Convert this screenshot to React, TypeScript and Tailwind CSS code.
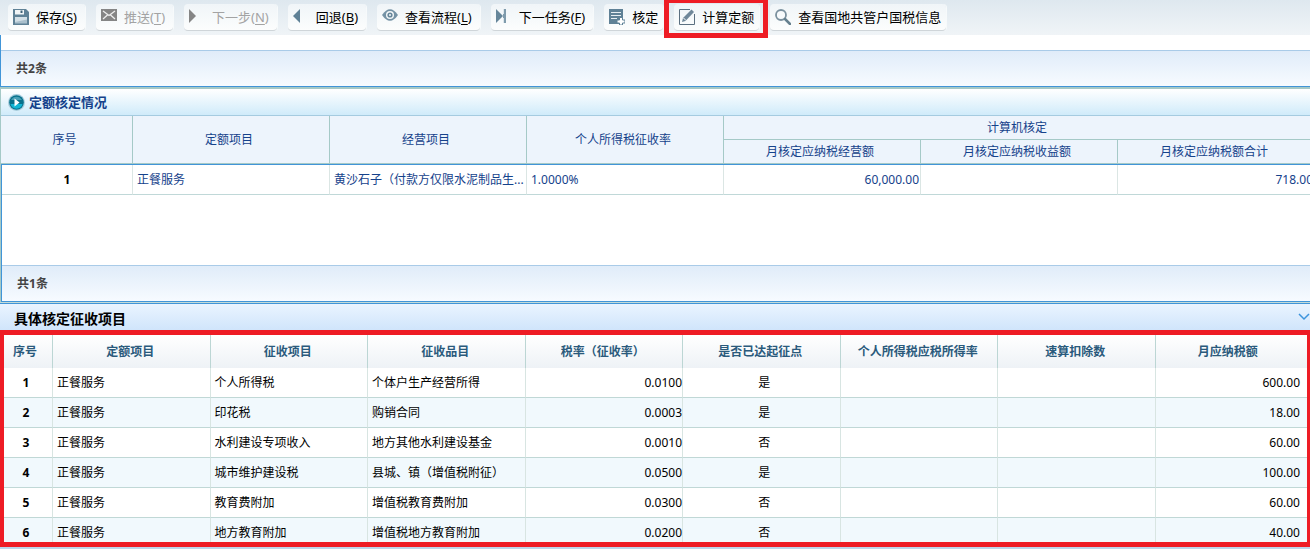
import type { ReactNode } from 'react';

type Action = {
  label: string;
  hotkey?: string;
  icon: ReactNode;
  disabled?: boolean;
  highlighted?: boolean;
};

function Icon({ children }: { children: ReactNode }) {
  return (
    <svg width="16" height="16" viewBox="0 0 16 16" className="shrink-0" aria-hidden="true">
      {children}
    </svg>
  );
}

const actions: Action[] = [
  {
    label: '保存',
    hotkey: 'S',
    icon: (
      <Icon>
        <path d="M0 0h13L16 3v13H0z" fill="#5f8196" />
        <path d="M2 1h9v4.500H2z" fill="#f1f5f7" />
        <path d="M7.500 1.500h2v2.500h-2z" fill="#3f6176" />
        <path d="M2 8h12v6.500H2z" fill="#a9bfcc" />
        <path d="M2 8h12v2.500L2 13z" fill="#d3dfe6" />
      </Icon>
    ),
  },
  {
    label: '推送',
    hotkey: 'T',
    disabled: true,
    icon: (
      <Icon>
        <path d="M0 0h16v12H0z" fill="#858585" />
        <path d="M2 2l6 4.500L14 2M2 10l4.500-4M14 10L9.500 6" stroke="#eee" strokeWidth="1.300" fill="none" />
      </Icon>
    ),
  },
  {
    label: '下一步',
    hotkey: 'N',
    disabled: true,
    icon: (
      <Icon>
        <path d="M0 0l7 7-7 7z" fill="#858585" />
      </Icon>
    ),
  },
  {
    label: '回退',
    hotkey: 'B',
    icon: (
      <Icon>
        <path d="M7 0v14L0 7z" fill="#5f8196" />
      </Icon>
    ),
  },
  {
    label: '查看流程',
    hotkey: 'L',
    icon: (
      <Icon>
        <path d="M0 6Q8-5.500 16 6 8 17.500 0 6z" fill="#7492a5" />
        <circle cx="8" cy="6" r="4" fill="#f3f7f9" />
        <circle cx="8" cy="6" r="2.600" fill="#66869a" />
        <circle cx="8" cy="6" r="1" fill="#f3f7f9" />
      </Icon>
    ),
  },
  {
    label: '下一任务',
    hotkey: 'F',
    icon: (
      <Icon>
        <path d="M0 0l7 7-7 7z" fill="#66869a" />
        <path d="M7 0h3v14H7z" fill="#7f9bac" />
        <path d="M7.500 0v5M7.500 9v5" stroke="#dce6ec" />
      </Icon>
    ),
  },
  {
    label: '核定',
    icon: (
      <Icon>
        <path d="M0 0h14v15H0z" fill="#5f8196" />
        <path d="M2 3.500h10M2 6.500h10M2 9.500h6" stroke="#e6edf1" />
        <path d="M10.500 8.500h3v2.500h2.500v3h-2.500v2h-3v-2H8v-3h2.500z" fill="#fff" stroke="#5f8196" />
      </Icon>
    ),
  },
  {
    label: '计算定额',
    highlighted: true,
    icon: (
      <Icon>
        <path d="M11 .5H.5v15h15V5" stroke="#5b6f80" fill="none" />
        <path d="M3 13l1-4L12.500.5 15 3l-8.500 9z" fill="#70889a" />
        <path d="M4.500 9l2.500 2.500" stroke="#fff" />
      </Icon>
    ),
  },
  {
    label: '查看国地共管户国税信息',
    icon: (
      <Icon>
        <circle cx="6" cy="6" r="5" stroke="#7b919f" strokeWidth="1.800" fill="#f7fafc" />
        <path d="M10 10l5 5" stroke="#66808f" strokeWidth="2.500" strokeLinecap="round" />
      </Icon>
    ),
  },
];

function ToolbarButton({ label, hotkey, icon, disabled, highlighted }: Action) {
  return (
    <div className="relative shrink-0">
      <button
        type="button"
        disabled={disabled}
        className={`${hotkey ? 'pr-2' : 'pr-[5px]'} flex h-[27px] items-center gap-[7px] whitespace-nowrap rounded-sm border-b border-[#cfd5d9] bg-gradient-to-b from-[#f0f5f8] to-[#fcfdfd] pl-[5px] text-[13px] leading-5 text-black shadow-[1px_0_0_#f7fafb] disabled:text-[#a3a3a3]`}
      >
        {icon}
        <span>
          {label}
          {hotkey && (
            <>
              (<u className="underline-offset-2">{hotkey}</u>)
            </>
          )}
        </span>
      </button>
      {highlighted && (
        <div className="pointer-events-none absolute -left-[10px] -right-[9px] -top-1 -bottom-[7px] z-10 border-5 border-t-3 border-[#ee1c25]" />
      )}
    </div>
  );
}

function CountBar({ count }: { count: number }) {
  return (
    <div className="flex h-9 items-center border-t border-[#a9cbe8] bg-gradient-to-b from-[#e0ecf9] to-[#f7fbff] px-[15px] text-xs font-bold text-[#444]">
      共{count}条
    </div>
  );
}

const quotaHead = 'border-r border-b border-[#a5c9c7] bg-[#edf4fc] py-0 pl-0 pr-1 text-center font-normal';
const quotaCell = 'h-[30px] border-r border-b border-r-[#dbe6e4] border-b-[#c0d8d8] py-0';

function QuotaPanel() {
  return (
    <section className="border-t-2 border-l border-[#a5c9c7]">
      <h2 className="flex h-[27px] items-center gap-1 border-b border-[#a5cbe0] bg-gradient-to-b from-white to-[#d0ebfa] pl-[7px] text-[13px] font-bold text-[#15428b]">
        <svg width="17" height="17" viewBox="0 0 17 17" aria-hidden="true">
          <circle cx="8.500" cy="8.500" r="8.500" fill="#a8cddd" />
          <circle cx="8.500" cy="8.500" r="7.300" fill="#08718c" />
          <path d="M2.500 10a6.200 6.200 0 0 0 12 0z" fill="#12b5d4" />
          <path d="M3 6a6.200 6.200 0 0 1 11 0z" fill="#479fb5" />
          <path d="M6.500 4.500l5 4-5 4z" fill="#fff" />
        </svg>
        <span className="pt-0.5">定额核定情况</span>
      </h2>
      <div className="overflow-hidden">
        <table className="w-[calc(100%+5px)] table-fixed border-separate border-spacing-0 text-xs text-[#15428b]">
          <colgroup>
            <col className="w-[132px]" />
            <col span={6} />
          </colgroup>
          <thead>
            <tr className="h-6">
              <th rowSpan={2} className={quotaHead}>序号</th>
              <th rowSpan={2} className={quotaHead}>定额项目</th>
              <th rowSpan={2} className={quotaHead}>经营项目</th>
              <th rowSpan={2} className={quotaHead}>个人所得税征收率</th>
              <th colSpan={3} className={quotaHead}>计算机核定</th>
            </tr>
            <tr className="h-6">
              <th className={quotaHead}>月核定应纳税经营额</th>
              <th className={quotaHead}>月核定应纳税收益额</th>
              <th className={quotaHead}>月核定应纳税额合计</th>
            </tr>
          </thead>
        </table>
      </div>
      <div className="overflow-hidden border-y border-l border-[#4195d8]">
        <div className="h-[100px]">
          <table className="w-[calc(100%+5px)] table-fixed border-separate border-spacing-0 text-xs text-[#15428b]">
            <colgroup>
              <col className="w-[131px]" />
              <col span={6} />
            </colgroup>
            <tbody>
              <tr>
                <td className={`${quotaCell} text-center font-bold text-black`}>1</td>
                <td className={`${quotaCell} pl-1`}>正餐服务</td>
                <td className={`${quotaCell} overflow-hidden whitespace-nowrap pl-1`}>
                  黄沙石子（付款方仅限水泥制品生...
                </td>
                <td className={`${quotaCell} pl-1`}>1.0000%</td>
                <td className={`${quotaCell} pr-px text-right`}>60,000.00</td>
                <td className={quotaCell} />
                <td className={`${quotaCell} pr-px text-right`}>718.00</td>
              </tr>
            </tbody>
          </table>
        </div>
        <CountBar count={1} />
      </div>
    </section>
  );
}

const levyColumns = [
  '序号',
  '定额项目',
  '征收项目',
  '征收品目',
  '税率（征收率）',
  '是否已达起征点',
  '个人所得税应税所得率',
  '速算扣除数',
  '月应纳税额',
];

const levyRows = [
  { item: '个人所得税', detail: '个体户生产经营所得', rate: '0.0100', reached: '是', tax: '600.00' },
  { item: '印花税', detail: '购销合同', rate: '0.0003', reached: '是', tax: '18.00' },
  { item: '水利建设专项收入', detail: '地方其他水利建设基金', rate: '0.0010', reached: '否', tax: '60.00' },
  { item: '城市维护建设税', detail: '县城、镇（增值税附征）', rate: '0.0500', reached: '是', tax: '100.00' },
  { item: '教育费附加', detail: '增值税教育费附加', rate: '0.0300', reached: '否', tax: '60.00' },
  { item: '地方教育附加', detail: '增值税地方教育附加', rate: '0.0200', reached: '否', tax: '40.00' },
];

const levyCell = 'h-[30px] border-r border-b border-r-[#d8e5e2] border-b-[#c0d8d6] py-0';

function LevyPanel() {
  return (
    <section className="border-t border-[#4195d8]">
      <div className="flex h-[26px] items-center justify-between bg-gradient-to-b from-[#eaf4ff] to-[#d0e5fb] pl-3.5">
        <h2 className="pt-1 text-sm font-bold text-black">具体核定征收项目</h2>
        <button type="button" aria-label="收起" className="text-[#3d94dc]">
          <svg width="12" height="8" viewBox="0 0 12 8" fill="none" aria-hidden="true">
            <path d="M1 1l5 5 5-5" stroke="currentColor" strokeWidth="1.500" />
          </svg>
        </button>
      </div>
      <div className="h-[217px] overflow-hidden border-x-4 border-y-5 border-r-3 border-[#ee1c25]">
        <table className="w-[calc(100%+6px)] table-fixed border-separate border-spacing-0 text-xs text-black">
          <colgroup>
            <col className="w-[49px]" />
            <col span={8} />
          </colgroup>
          <thead>
            <tr className="h-[33px]">
              {levyColumns.map((name) => (
                <th
                  key={name}
                  className="border-r border-[#bcd6d4] bg-gradient-to-b from-white to-[#eef2f6] py-0 pl-0 pr-0.5 text-center font-bold text-[#2a5a7c] first:pr-1.5 last:pr-3"
                >
                  {name}
                </th>
              ))}
            </tr>
          </thead>
          <tbody>
            {levyRows.map((row, index) => (
              <tr key={row.item} className="even:bg-[#f1f9fd]">
                <td className={`${levyCell} pl-0 pr-1 text-center font-bold`}>{index + 1}</td>
                <td className={`${levyCell} pl-1`}>正餐服务</td>
                <td className={`${levyCell} pl-1`}>{row.item}</td>
                <td className={`${levyCell} pl-1`}>{row.detail}</td>
                <td className={`${levyCell} text-right`}>{row.rate}</td>
                <td className={`${levyCell} pl-1.5 text-center`}>{row.reached}</td>
                <td className={levyCell} />
                <td className={levyCell} />
                <td className={`${levyCell} pr-3 text-right`}>{row.tax}</td>
              </tr>
            ))}
          </tbody>
        </table>
      </div>
      <div className="h-[3px] border-b border-white bg-[#bdd5ea]" />
    </section>
  );
}

function App() {
  return (
    <main className="overflow-hidden bg-white font-['Noto_Sans','Noto_Sans_CJK_SC',sans-serif]">
      <div className="flex h-[35px] items-start gap-[11px] bg-gradient-to-b from-[#dee8ef] to-[#f0f4f7] pl-2 pt-1">
        {actions.map((action) => (
          <ToolbarButton key={action.label} {...action} />
        ))}
      </div>
      <div className="border-b border-l border-[#4195d8] pt-[15px]">
        <CountBar count={2} />
      </div>
      <QuotaPanel />
      <div className="h-px bg-[#c5dcd8]" />
      <LevyPanel />
    </main>
  );
}

export default App;
